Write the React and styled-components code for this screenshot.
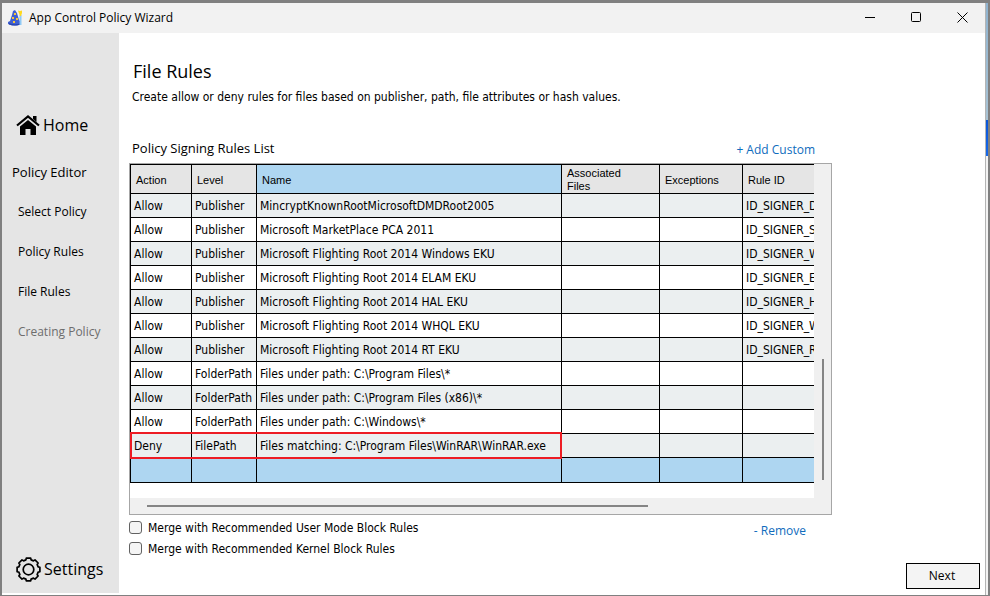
import React from 'react'
import styled, { createGlobalStyle } from "styled-components";

const columns = [
    { name: 'Action', width: 61 },
    { name: 'Level', width: 65 },
    { name: 'Name', width: 305, active: true },
    { name: 'Associated Files', width: 98 },
    { name: 'Exceptions', width: 83 },
    { name: 'Rule ID', width: 160 },
]

const rules = [
    ['Allow', 'Publisher', 'MincryptKnownRootMicrosoftDMDRoot2005', '', '', 'ID_SIGNER_D'],
    ['Allow', 'Publisher', 'Microsoft MarketPlace PCA 2011', '', '', 'ID_SIGNER_ST'],
    ['Allow', 'Publisher', 'Microsoft Flighting Root 2014 Windows EKU', '', '', 'ID_SIGNER_W'],
    ['Allow', 'Publisher', 'Microsoft Flighting Root 2014 ELAM EKU', '', '', 'ID_SIGNER_EL'],
    ['Allow', 'Publisher', 'Microsoft Flighting Root 2014 HAL EKU', '', '', 'ID_SIGNER_H'],
    ['Allow', 'Publisher', 'Microsoft Flighting Root 2014 WHQL EKU', '', '', 'ID_SIGNER_W'],
    ['Allow', 'Publisher', 'Microsoft Flighting Root 2014 RT EKU', '', '', 'ID_SIGNER_RT'],
    ['Allow', 'FolderPath', 'Files under path: C:\\Program Files\\*', '', '', ''],
    ['Allow', 'FolderPath', 'Files under path: C:\\Program Files (x86)\\*', '', '', ''],
    ['Allow', 'FolderPath', 'Files under path: C:\\Windows\\*', '', '', ''],
    ['Deny', 'FilePath', 'Files matching: C:\\Program Files\\WinRAR\\WinRAR.exe', '', '', ''],
    ['', '', '', '', '', ''],
]

const steps = ['Select Policy', 'Policy Rules', 'File Rules']

const condensed = '"DejaVu Sans Condensed", "DejaVu Sans", sans-serif'

const WizardLogo = () => (
    <svg width="16" height="18" viewBox="0 0 16 18" aria-hidden="true">
        <path d="M5 2l2-1 2 3 2 7 2 2v2l-4 1.500H4L0 15v-2l2-1 2-6z" fill="#3f5fd0" />
        <path d="M1 14q6 2.500 12 0v1.500q-6 2-12 0z" fill="#2743b0" />
        <path d="M6 4h2v2H6zM4 8h2v2H4zM8 9h2v2H8zM5 12h2v2H5z" fill="#f5c33b" />
        <path d="M12.500 6v10" stroke="#8fc9f5" strokeWidth="2" />
        <path d="M10 1.500l2 .5 2-.5v2.500l-1 3h-1l-1-2.500z" fill="#ffd91f" />
    </svg>
)

const HomeIcon = () => (
    <svg width="24" height="20" viewBox="0 0 24 20" aria-hidden="true">
        <path d="M12 5l8 6.500V20h-5.500v-6h-5v6H4v-8.500z" />
        <path d="M1 10.500L12 1.500l11 9" fill="none" stroke="#000" strokeWidth="2.200" />
        <path d="M17 1h3.500v6L17 4z" />
    </svg>
)

// toothed ring, built from one tooth turned round the centre
const GearIcon = () => {
    const points = []
    for (let i = 0; i < 8; i++) {
        [[-15, 10], [-11, 11.6], [11, 11.6], [15, 10]].forEach(([deg, r]) => {
            const a = ((i * 45 + deg) * Math.PI) / 180
            points.push(`${(12.5 + r * Math.sin(a)).toFixed(2)},${(12.5 - r * Math.cos(a)).toFixed(2)}`)
        })
    }
    return (
        <svg width="25" height="25" viewBox="0 0 25 25" fill="none" stroke="#000" strokeWidth="1.700" strokeLinejoin="round" aria-hidden="true">
            <polygon points={points.join(' ')} />
            <circle cx="12.500" cy="12.500" r="5.300" />
        </svg>
    )
}

const App = () => {
    return (
        <>
            <GlobalStyle />
            <Desktop>
                <Window>
                    <TitleBar>
                        <WizardLogo />
                        <Title>App Control Policy Wizard</Title>
                        <WindowButton aria-label="Minimize">
                            <svg width="11" height="11"><path d="M0 5.500h10" /></svg>
                        </WindowButton>
                        <WindowButton aria-label="Maximize">
                            <svg width="11" height="11"><rect x=".5" y=".5" width="9" height="9" rx="1" /></svg>
                        </WindowButton>
                        <WindowButton aria-label="Close">
                            <svg width="11" height="11"><path d="M.5 .5l10 10M10.500 .5l-10 10" /></svg>
                        </WindowButton>
                    </TitleBar>

                    <Body>
                        <Sidebar>
                            <MainLink href="#home"><HomeIcon />Home</MainLink>
                            <SectionName>Policy Editor</SectionName>
                            {steps.map((step) => (
                                <StepLink key={step} href="#step">{step}</StepLink>
                            ))}
                            <StepLink $muted href="#step">Creating Policy</StepLink>
                            <MainLink $bottom href="#settings"><GearIcon />Settings</MainLink>
                        </Sidebar>

                        <Page>
                            <Heading>File Rules</Heading>
                            <Intro>Create allow or deny rules for files based on publisher, path, file attributes or hash values.</Intro>

                            <ListArea>
                                <ListBar>
                                    <ListTitle>Policy Signing Rules List</ListTitle>
                                    <TextButton>+ Add Custom</TextButton>
                                </ListBar>

                                <Grid>
                                    <GridView>
                                        <Table aria-label="Policy Signing Rules List">
                                            <colgroup>
                                                {columns.map((col) => <Col key={col.name} $width={col.width} />)}
                                            </colgroup>
                                            <thead>
                                                <tr>
                                                    {columns.map((col) => (
                                                        <HeadCell key={col.name} $active={col.active}>{col.name}</HeadCell>
                                                    ))}
                                                </tr>
                                            </thead>
                                            <tbody>
                                                {rules.map((rule, index) => (
                                                    <Row key={index} $selected={index === rules.length - 1}>
                                                        {rule.map((val, i) => <Cell key={i}>{val}</Cell>)}
                                                    </Row>
                                                ))}
                                            </tbody>
                                        </Table>
                                        <Highlight />
                                    </GridView>
                                    <VerticalBar><VerticalThumb /></VerticalBar>
                                    <HorizontalBar><HorizontalThumb /></HorizontalBar>
                                </Grid>

                                <Options>
                                    <div>
                                        <Option><input type="checkbox" />Merge with Recommended User Mode Block Rules</Option>
                                        <Option><input type="checkbox" />Merge with Recommended Kernel Block Rules</Option>
                                    </div>
                                    <TextButton $low>- Remove</TextButton>
                                </Options>
                            </ListArea>

                            <NextButton>Next</NextButton>
                        </Page>
                    </Body>
                </Window>
                <Backdrop />
            </Desktop>
        </>
    )
}

const GlobalStyle = createGlobalStyle`
    * {
        box-sizing: border-box;
    }

    body {
        margin: 0;
        color: #000;
        font-family: "Open Sans", "Noto Sans", sans-serif;
        font-size: 12px;
    }

    button {
        font-family: inherit;
        color: inherit;
    }
`

const Desktop = styled.div`
    display: flex;
    min-height: 100vh;
    border: 2px solid #808080;
    border-top-width: 3px;
    border-bottom-width: 1px;
`

const Window = styled.div`
    flex: 1;
    min-width: 0;
    display: flex;
    flex-direction: column;
    background: #fff;
`

const Backdrop = styled.div`
    width: 3px;
    border-left: 1px solid #b4b4b4;
    background: linear-gradient(#8fb3cf 0, #a9c3d4 117px, #0b57d8 117px, #1668e8 153px, #f3f3f3 153px);
`

const TitleBar = styled.header`
    display: flex;
    align-items: center;
    height: 30px;
    padding-left: 6px;
    background: #f2f2f2;
`

const Title = styled.span`
    flex: 1;
    padding-left: 5px;
    line-height: 16px;
`

const WindowButton = styled.button`
    width: 46px;
    height: 30px;
    padding: 0;
    border: 0;
    background: none;

    svg {
        fill: none;
        stroke: #000;
    }
`

const Body = styled.div`
    flex: 1;
    display: flex;
`

const Sidebar = styled.nav`
    display: flex;
    flex-direction: column;
    width: 117px;
    margin-bottom: 2px;
    padding-top: 80px;
    background: #e5e5e5;
`

const MainLink = styled.a`
    display: flex;
    align-items: center;
    gap: 3px;
    height: 24px;
    margin-top: ${(props) => (props.$bottom ? 'auto' : '0')};
    margin-bottom: ${(props) => (props.$bottom ? '12px' : '0')};
    padding-left: 14px;
    color: #000;
    font-size: 16px;
    text-decoration: none;
`

const SectionName = styled.div`
    margin-bottom: 9px;
    padding: 24px 0 0 10px;
    font-size: 13px;
    line-height: 22px;
`

const StepLink = styled.a`
    padding-left: 16px;
    color: ${(props) => (props.$muted ? '#6d6d6d' : '#000')};
    font-size: 12px;
    line-height: 40px;
    text-decoration: none;
`

const Page = styled.main`
    flex: 1;
    min-width: 0;
    display: flex;
    flex-direction: column;
    padding: 25px 5px 6px 10px;
`

const Heading = styled.h1`
    margin: 0;
    padding-left: 4px;
    font-size: 18px;
    font-weight: 400;
    line-height: 26px;
`

const Intro = styled.p`
    margin: 4px 0 32px;
    padding-left: 3px;
    font-family: ${condensed};
    line-height: 18px;
`

const ListArea = styled.section`
    margin-right: 148px;
`

const ListBar = styled.div`
    display: flex;
    align-items: flex-start;
    justify-content: space-between;
    height: 25px;
    padding: 0 17px 0 3px;
`

const ListTitle = styled.h2`
    margin: 0;
    font-size: 13px;
    font-weight: 400;
    line-height: 20px;
`

const TextButton = styled.button`
    padding: ${(props) => (props.$low ? '3px 9px 0 0' : '1px 0 0')};
    border: 0;
    background: none;
    color: #0f6cbd;
    font-size: 12px;
    line-height: 22px;
`

const Grid = styled.div`
    display: grid;
    grid-template-columns: minmax(0, 1fr) 17px;
    border: 1px solid #a6a6a6;
    background: #f0f0f0;
`

const GridView = styled.div`
    position: relative;
    overflow: hidden;
    height: 334px;
    background: #fff;
`

const Table = styled.table`
    table-layout: fixed;
    width: 772px;
    border-collapse: separate;
    border-spacing: 0;
    border-top: 1px solid #000;
    border-left: 1px solid #000;
`

const Col = styled.col`
    width: ${(props) => props.$width}px;
`

const HeadCell = styled.th`
    height: 29px;
    padding: 2px 24px 0 5px;
    border-right: 1px solid #000;
    border-bottom: 1px solid #000;
    background: ${(props) => (props.$active ? '#aed6f1' : '#e5e5e5')};
    font-family: "Liberation Sans", Arial, sans-serif;
    font-size: 11px;
    font-weight: 400;
    line-height: 13px;
    text-align: left;
`

const Row = styled.tr`
    height: ${(props) => (props.$selected ? '25px' : '24px')};
    background: ${(props) => (props.$selected ? '#aed6f1' : '#fff')};

    &:nth-child(odd) {
        background: #ebeff0;
    }
`

const Cell = styled.td`
    padding: 0 3px;
    border-right: 1px solid #000;
    border-bottom: 1px solid #000;
    font-family: ${condensed};
    line-height: 16px;
    white-space: nowrap;
`

const Highlight = styled.div`
    position: absolute;
    top: 268px;
    left: 0;
    width: 432px;
    height: 27px;
    border: 2px solid #ed1c24;
`

const VerticalBar = styled.div`
    display: flex;
    justify-content: center;
    padding-top: 195px;
`

const VerticalThumb = styled.div`
    width: 2px;
    height: 121px;
    background: #858585;
`

const HorizontalBar = styled.div`
    grid-column: 1 / 3;
    height: 16px;
    padding: 7px 183px 0 17px;
`

const HorizontalThumb = styled.div`
    height: 2px;
    background: #858585;
`

const Options = styled.div`
    display: flex;
    align-items: flex-start;
    justify-content: space-between;
    padding: 2px 17px 0 0;
`

const Option = styled.label`
    display: flex;
    align-items: center;
    gap: 6px;
    height: 21px;
    font-family: ${condensed};

    input {
        appearance: none;
        width: 13px;
        height: 13px;
        margin: 0;
        border: 1px solid #626262;
        border-radius: 3px;
        background: #f5f5f5;
    }
`

const NextButton = styled.button`
    align-self: flex-end;
    width: 74px;
    height: 26px;
    margin-top: auto;
    padding: 0 2px 2px 0;
    border: 1px solid #000;
    background: #f4f4f4;
    font-size: 12px;
`

export default App
